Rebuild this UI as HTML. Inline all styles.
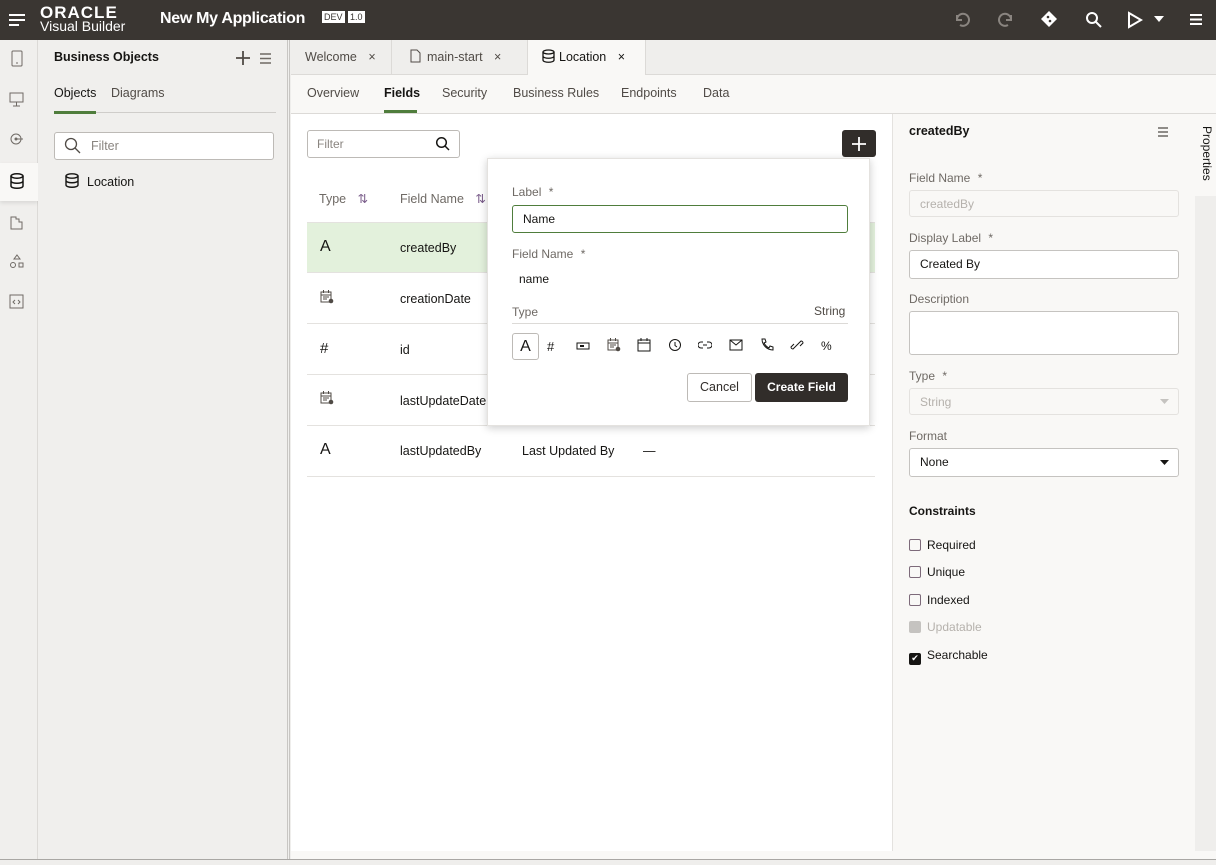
<!DOCTYPE html>
<html><head><meta charset="utf-8"><style>
*{box-sizing:border-box;margin:0;padding:0}
body{width:1216px;height:865px;overflow:hidden;font-family:"Liberation Sans",sans-serif;font-size:12.5px;color:#161513;background:#efeeec;position:relative}
.abs{position:absolute}
.hdr{left:0;top:0;width:1216px;height:40px;background:#3a3632}
.rail{left:0;top:40px;width:38px;height:819px;background:#f0efed;border-right:1px solid #dcdad7}
.lp{left:38px;top:40px;width:252px;height:819px;background:#f0efed;border-right:3px double #c8c6c3}
.tabs{left:291px;top:40px;width:925px;height:35px;background:#efeeec;border-bottom:1px solid #dcdad7}
.tab{top:0;height:35px;border-right:1px solid #dcdad7;color:#504b46;font-size:12.5px;line-height:34px;padding-left:14px}
.sub{left:291px;top:75px;width:925px;height:39px;background:#f9f8f6;border-bottom:1px solid #dcdad7}
.main{left:291px;top:114px;width:601px;height:737px;background:#fff}
.rp{left:892px;top:114px;width:303px;height:737px;background:#f9f8f6;border-left:1px solid #e4e2df}
.lbl{color:#6f6a65;font-size:12px}
.inp{border:1px solid #c5c3c0;border-radius:3px;background:#fff;height:29px;padding-left:10px;line-height:27px;font-size:12px}
.row{left:307px;width:568px;height:51px;border-bottom:1px solid #e4e2df}
.cb{width:12px;height:12px;border:1.5px solid #7d6a7a;border-radius:2px;display:inline-block}
svg{display:block}
</style></head><body>
<svg width="0" height="0" style="position:absolute"><defs>
<g id="cal"><rect x="1" y="2" width="10" height="10" stroke="#504b46" fill="none"/><path d="M1 5h10M3.5 0v3M8.5 0v3M3 7h6M3 9h4" stroke="#504b46"/><circle cx="11" cy="11" r="2.3" fill="#504b46"/></g>
</defs></svg>
<div class="abs hdr">
 <svg class="abs" style="left:8px;top:12px" width="18" height="16"><path d="M1 3h16M1 8h16M1 13h10" stroke="#fff" stroke-width="2"/></svg>
 <div class="abs" style="left:40px;top:3px;color:#fff;font-size:17px;font-weight:bold;letter-spacing:1px">ORACLE</div>
 <div class="abs" style="left:40px;top:18px;color:#fff;font-size:14px">Visual Builder</div>
 <div class="abs" style="left:160px;top:10px;color:#fff;font-size:16px;font-weight:bold;letter-spacing:-0.3px">New My Application</div>
 <div class="abs" style="left:322px;top:11px;background:#fff;color:#3a3632;font-size:9px;padding:1px 2px">DEV</div>
 <div class="abs" style="left:348px;top:11px;background:#fff;color:#3a3632;font-size:9px;padding:1px 2px">1.0</div>
 <svg class="abs" style="left:953px;top:11px" width="18" height="16"><path d="M4 4v5h5M4 9a6 6 0 1 1 3 5" stroke="#8a8580" stroke-width="2" fill="none"/></svg>
 <svg class="abs" style="left:997px;top:11px" width="18" height="16"><path d="M14 4v5H9M14 9a6 6 0 1 0-3 5" stroke="#8a8580" stroke-width="2" fill="none"/></svg>
 <svg class="abs" style="left:1040px;top:10px" width="18" height="18"><path d="M9 1l8 8-8 8-8-8z" fill="#fff"/><circle cx="8" cy="7" r="1.3" fill="#3a3632"/><circle cx="10" cy="11" r="1.3" fill="#3a3632"/></svg>
 <svg class="abs" style="left:1085px;top:11px" width="18" height="18"><circle cx="7" cy="7" r="5" stroke="#fff" stroke-width="2" fill="none"/><path d="M11 11l5 5" stroke="#fff" stroke-width="2"/></svg>
 <svg class="abs" style="left:1127px;top:11px" width="16" height="18"><path d="M2 2l12 7-12 7z" stroke="#fff" stroke-width="2" fill="none"/></svg>
 <svg class="abs" style="left:1154px;top:16px" width="10" height="6"><path d="M0 0h10L5 6z" fill="#fff"/></svg>
 <svg class="abs" style="left:1190px;top:13px" width="12" height="13"><path d="M0 2h12M0 6.5h12M0 11h12" stroke="#fff" stroke-width="2"/></svg>
</div>
<div class="abs rail">
 <svg class="abs" style="left:10px;top:10px" width="14" height="18"><rect x="2" y="1" width="10" height="15" rx="1" stroke="#6f6a65" fill="none"/><path d="M6 13h2" stroke="#6f6a65"/></svg>
 <svg class="abs" style="left:9px;top:52px" width="16" height="16"><rect x="1" y="1" width="13" height="9" stroke="#6f6a65" fill="none"/><path d="M7.5 10v4M4 14h7" stroke="#6f6a65"/></svg>
 <svg class="abs" style="left:9px;top:92px" width="16" height="14"><circle cx="7" cy="7" r="5" stroke="#6f6a65" fill="none"/><circle cx="7" cy="7" r="1.5" fill="#6f6a65"/><path d="M8 7h6" stroke="#6f6a65"/></svg>
 <div class="abs" style="left:0;top:123px;width:38px;height:38px;background:#f9f8f6;box-shadow:0 2px 4px rgba(0,0,0,.1)"></div>
 <svg class="abs" style="left:10px;top:133px" width="14" height="16"><ellipse cx="7" cy="3" rx="6" ry="2.2" stroke="#161513" stroke-width="1.5" fill="none"/><path d="M1 3v10c0 3 12 3 12 0V3M1 8c0 3 12 3 12 0" stroke="#161513" stroke-width="1.5" fill="none"/></svg>
 <svg class="abs" style="left:10px;top:174px" width="14" height="16"><path d="M1 3h5v2h3v3h3v7H1z" stroke="#6f6a65" fill="none"/></svg>
 <svg class="abs" style="left:9px;top:214px" width="16" height="16"><path d="M8 1l3 4H5z" stroke="#6f6a65" fill="none"/><circle cx="4" cy="11" r="2.5" stroke="#6f6a65" fill="none"/><rect x="10" y="9" width="4" height="4" stroke="#6f6a65" fill="none"/></svg>
 <svg class="abs" style="left:9px;top:254px" width="16" height="16"><rect x="1" y="1" width="13" height="13" stroke="#6f6a65" fill="none"/><path d="M6 6l-2 2 2 2M9 6l2 2-2 2" stroke="#6f6a65" fill="none"/></svg>
</div>
<div class="abs lp">
 <div class="abs" style="left:16px;top:10px;font-weight:bold;font-size:12.5px">Business Objects</div>
 <svg class="abs" style="left:198px;top:11px" width="14" height="14"><path d="M7 0v14M0 7h14" stroke="#504b46" stroke-width="1.8"/></svg>
 <svg class="abs" style="left:222px;top:13px" width="11" height="11"><path d="M0 1h11M0 5.5h11M0 10h11" stroke="#6f6a65" stroke-width="1.4"/></svg>
 <div class="abs" style="left:16px;top:46px">Objects</div>
 <div class="abs" style="left:73px;top:46px;color:#504b46">Diagrams</div>
 <div class="abs" style="left:16px;top:72px;width:222px;height:1px;background:#cfcdca"></div>
 <div class="abs" style="left:16px;top:71px;width:42px;height:3px;background:#4f7d3c"></div>
 <div class="abs" style="left:16px;top:92px;width:220px;height:28px;border:1px solid #bdbab6;border-radius:3px;background:#fff"></div>
 <svg class="abs" style="left:26px;top:97px" width="18" height="18"><circle cx="7" cy="7" r="5.5" stroke="#504b46" stroke-width="1.3" fill="none"/><path d="M11 11l5 5" stroke="#504b46" stroke-width="1.3"/></svg>
 <div class="abs" style="left:53px;top:99px;color:#8a8580">Filter</div>
 <svg class="abs" style="left:27px;top:133px" width="14" height="15"><ellipse cx="7" cy="3" rx="6" ry="2.2" stroke="#161513" stroke-width="1.4" fill="none"/><path d="M1 3v9c0 3 12 3 12 0V3M1 7.5c0 3 12 3 12 0" stroke="#161513" stroke-width="1.4" fill="none"/></svg>
 <div class="abs" style="left:49px;top:135px">Location</div>
</div>
<div class="abs tabs">
 <div class="abs tab" style="left:0;width:101px">Welcome <span style="margin-left:8px">×</span></div>
 <div class="abs tab" style="left:101px;width:136px;padding-left:18px"><svg style="display:inline-block;vertical-align:-2px;margin-right:6px" width="11" height="14"><path d="M1 1h6l3 3v9H1z" stroke="#504b46" fill="none"/></svg>main-start <span style="margin-left:8px">×</span></div>
 <div class="abs tab" style="left:237px;width:118px;background:#f9f8f6;height:36px;color:#161513"><svg style="display:inline-block;vertical-align:-2px;margin-right:4px" width="13" height="14"><ellipse cx="6.5" cy="3" rx="5.5" ry="2" stroke="#161513" stroke-width="1.3" fill="none"/><path d="M1 3v8c0 3 11 3 11 0V3M1 7c0 3 11 3 11 0" stroke="#161513" stroke-width="1.3" fill="none"/></svg>Location <span style="margin-left:8px">×</span></div>
</div>
<div class="abs sub">
 <div class="abs" style="left:16px;top:11px;color:#504b46">Overview</div>
 <div class="abs" style="left:93px;top:11px;font-weight:bold">Fields</div>
 <div class="abs" style="left:93px;top:35px;width:33px;height:3px;background:#4f7d3c"></div>
 <div class="abs" style="left:151px;top:11px;color:#504b46">Security</div>
 <div class="abs" style="left:222px;top:11px;color:#504b46">Business Rules</div>
 <div class="abs" style="left:330px;top:11px;color:#504b46">Endpoints</div>
 <div class="abs" style="left:412px;top:11px;color:#504b46">Data</div>
</div>
<div class="abs main"></div>
<div class="abs" style="left:307px;top:130px;width:153px;height:28px;border:1px solid #bdbab6;border-radius:3px;background:#fff"></div>
<div class="abs" style="left:317px;top:137px;color:#8a8580;font-size:12px">Filter</div>
<svg class="abs" style="left:435px;top:136px" width="16" height="16"><circle cx="6.5" cy="6.5" r="4.8" stroke="#161513" stroke-width="1.5" fill="none"/><path d="M10 10l4 4" stroke="#161513" stroke-width="1.5"/></svg>
<div class="abs" style="left:842px;top:130px;width:34px;height:27px;background:#312d2a;border-radius:3px"></div>
<svg class="abs" style="left:851px;top:136px" width="16" height="16"><path d="M8 1v14M1 8h14" stroke="#fff" stroke-width="1.8"/></svg>
<div class="abs" style="left:319px;top:191px;color:#6f6a65">Type <span style="color:#7a5d8a;margin-left:8px">⇅</span></div>
<div class="abs" style="left:400px;top:191px;color:#6f6a65">Field Name <span style="color:#7a5d8a;margin-left:8px">⇅</span></div>
<div class="abs row" style="top:222px;background:#e3f1dc;border-top:1px solid #e4e2df"></div>
<div class="abs row" style="top:273px"></div>
<div class="abs row" style="top:324px"></div>
<div class="abs row" style="top:375px"></div>
<div class="abs row" style="top:426px"></div>
<div class="abs" style="left:320px;top:238px;font-size:16px">A</div><div class="abs" style="left:400px;top:241px">createdBy</div>
<svg class="abs" style="left:320px;top:290px" width="15" height="15"><use href="#cal"/></svg><div class="abs" style="left:400px;top:292px">creationDate</div>
<div class="abs" style="left:320px;top:340px;font-size:15px">#</div><div class="abs" style="left:400px;top:343px">id</div>
<svg class="abs" style="left:320px;top:391px" width="15" height="15"><use href="#cal"/></svg><div class="abs" style="left:400px;top:394px">lastUpdateDate</div>
<div class="abs" style="left:320px;top:441px;font-size:16px">A</div><div class="abs" style="left:400px;top:444px">lastUpdatedBy</div>
<div class="abs" style="left:522px;top:444px">Last Updated By</div>
<div class="abs" style="left:643px;top:444px">—</div>
<!-- popup -->
<div class="abs" style="left:487px;top:158px;width:383px;height:268px;background:#fff;box-shadow:0 2px 8px rgba(0,0,0,.2);border:1px solid #e4e2df">
 <div class="abs lbl" style="left:24px;top:26px">Label <span style="margin-left:4px">*</span></div>
 <div class="abs inp" style="left:24px;top:46px;width:336px;height:28px;border-color:#4f7d3c">Name</div>
 <div class="abs lbl" style="left:24px;top:88px">Field Name <span style="margin-left:4px">*</span></div>
 <div class="abs" style="left:31px;top:113px;font-size:12px">name</div>
 <div class="abs lbl" style="left:24px;top:146px">Type</div>
 <div class="abs" style="left:326px;top:145px;font-size:12px;color:#504b46">String</div>
 <div class="abs" style="left:24px;top:164px;width:336px;height:1px;background:#dcdad7"></div>
 <div class="abs" style="left:24px;top:174px;width:27px;height:27px;border:1px solid #bdbab6;border-radius:3px;text-align:center;font-size:16px;line-height:26px">A</div>
 <div class="abs" style="left:59px;top:180px;font-size:13px">#</div>
 <svg class="abs" style="left:88px;top:182px" width="14" height="10"><rect x="1" y="2" width="12" height="6" stroke="#161513" fill="none"/><rect x="4" y="4" width="4" height="2" fill="#161513"/></svg>
 <svg class="abs" style="left:119px;top:179px" width="15" height="15"><use href="#cal"/></svg>
 <svg class="abs" style="left:149px;top:179px" width="14" height="14"><rect x="1" y="2" width="12" height="11" stroke="#161513" fill="none"/><path d="M1 5h12M4 0v3M10 0v3" stroke="#161513"/></svg>
 <svg class="abs" style="left:180px;top:179px" width="14" height="14"><circle cx="7" cy="7" r="5.5" stroke="#161513" fill="none"/><path d="M7 4v3.5l2 1.5" stroke="#161513" fill="none"/></svg>
 <svg class="abs" style="left:210px;top:181px" width="14" height="10"><path d="M5 2H3a3 3 0 0 0 0 6h2M9 2h2a3 3 0 0 1 0 6H9M5 5h4" stroke="#161513" fill="none"/></svg>
 <svg class="abs" style="left:241px;top:180px" width="14" height="12"><rect x="1" y="1" width="12" height="10" stroke="#161513" fill="none"/><path d="M1 1l6 5 6-5" stroke="#161513" fill="none"/></svg>
 <svg class="abs" style="left:272px;top:179px" width="14" height="14"><path d="M2 1l3 0 1 3-2 1c1 2 3 4 5 5l1-2 3 1v3c-6 0-11-5-11-11z" stroke="#161513" fill="none"/></svg>
 <svg class="abs" style="left:302px;top:179px" width="14" height="14"><path d="M6 8l-3 3a2 2 0 0 1-2-2l3-3M8 6l3-3a2 2 0 0 1 2 2l-3 3M5 9l4-4" stroke="#161513" fill="none"/></svg>
 <div class="abs" style="left:333px;top:180px;font-size:12px">%</div>
 <div class="abs" style="left:199px;top:214px;width:65px;height:29px;border:1px solid #bdbab6;border-radius:3px;text-align:center;line-height:27px;color:#312d2a">Cancel</div>
 <div class="abs" style="left:267px;top:214px;width:93px;height:29px;background:#312d2a;border-radius:3px;text-align:center;line-height:29px;color:#fff;font-weight:bold;font-size:12px">Create Field</div>
</div>
<!-- right panel -->
<div class="abs rp">
 <div class="abs" style="left:16px;top:10px;font-weight:bold">createdBy</div>
 <svg class="abs" style="left:265px;top:13px" width="10" height="10"><path d="M0 1h10M0 5h10M0 9h10" stroke="#504b46" stroke-width="1.3"/></svg>
 <div class="abs lbl" style="left:16px;top:57px">Field Name <span style="margin-left:4px">*</span></div>
 <div class="abs inp" style="left:16px;top:76px;width:270px;height:27px;background:#f9f8f6;border-color:#e4e2df;color:#b5b1ac">createdBy</div>
 <div class="abs lbl" style="left:16px;top:117px">Display Label <span style="margin-left:4px">*</span></div>
 <div class="abs inp" style="left:16px;top:136px;width:270px;height:29px">Created By</div>
 <div class="abs lbl" style="left:16px;top:178px">Description</div>
 <div class="abs inp" style="left:16px;top:197px;width:270px;height:44px"></div>
 <div class="abs lbl" style="left:16px;top:255px">Type <span style="margin-left:4px">*</span></div>
 <div class="abs inp" style="left:16px;top:274px;width:270px;height:27px;background:#f9f8f6;border-color:#e4e2df;color:#b5b1ac">String</div>
 <svg class="abs" style="left:267px;top:285px" width="9" height="5"><path d="M0 0h9L4.5 5z" fill="#c5c3c0"/></svg>
 <div class="abs lbl" style="left:16px;top:315px">Format</div>
 <div class="abs inp" style="left:16px;top:334px;width:270px;height:29px">None</div>
 <svg class="abs" style="left:267px;top:346px" width="9" height="5"><path d="M0 0h9L4.5 5z" fill="#161513"/></svg>
 <div class="abs" style="left:16px;top:390px;font-weight:bold;font-size:12px">Constraints</div>
 <div class="abs" style="left:16px;top:424px;font-size:12px"><span class="cb" style="vertical-align:-2px;margin-right:6px"></span>Required</div>
 <div class="abs" style="left:16px;top:451px;font-size:12px"><span class="cb" style="vertical-align:-2px;margin-right:6px"></span>Unique</div>
 <div class="abs" style="left:16px;top:479px;font-size:12px"><span class="cb" style="vertical-align:-2px;margin-right:6px"></span>Indexed</div>
 <div class="abs" style="left:16px;top:506px;font-size:12px;color:#b5b1ac"><span class="cb" style="vertical-align:-2px;margin-right:6px;background:#c5c3c0;border-color:#c5c3c0"></span>Updatable</div>
 <div class="abs" style="left:16px;top:534px;font-size:12px"><span class="cb" style="vertical-align:-2px;margin-right:6px;background:#161513;border-color:#161513;color:#fff;font-size:9px;line-height:9px;text-align:center">✔</span>Searchable</div>
</div>
<div class="abs" style="left:1195px;top:114px;width:21px;height:82px;background:#f9f8f6"></div>
<div class="abs" style="left:1200px;top:126px;transform-origin:0 0;transform:rotate(90deg) translate(0,-14px);font-size:12px;color:#161513;white-space:nowrap">Properties</div>
<div class="abs" style="left:291px;top:851px;width:925px;height:8px;background:#f9f8f6"></div>
<div class="abs" style="left:0;top:859px;width:1216px;height:1px;background:#a9a7a4"></div>
</body></html>
